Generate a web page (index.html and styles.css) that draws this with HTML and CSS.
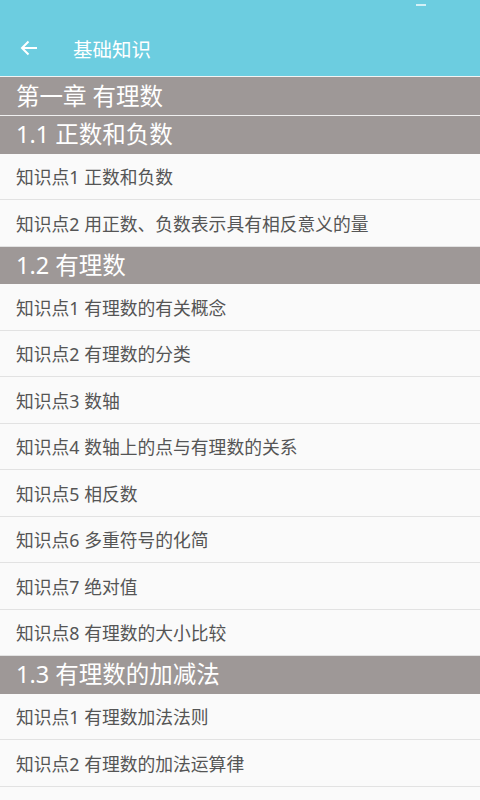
FILE: index.html
```html
<!DOCTYPE html>
<html lang="zh-CN">
<head>
    <meta charset="UTF-8">
    <meta name="viewport" content="width=device-width, initial-scale=1.0">
    <title>基础知识</title>
    <link rel="stylesheet" href="styles.css">
</head>
<body>
    <div class="topbar">
        <div class="status"><span class="status-mark"></span></div>
        <div class="toolbar">
            <svg class="back" width="18" height="16" viewBox="0 0 18 16">
                <path d="M17 8H2M8.5 1.5L2 8l6.5 6.5" fill="none" stroke="#fff" stroke-width="2"/>
            </svg>
            <span class="title">基础知识</span>
        </div>
    </div>

    <div class="list">
        <div class="chapter">第一章 有理数</div>
        <div class="section">1.1 正数和负数</div>
        <div class="item">知识点1 正数和负数</div>
        <div class="item">知识点2 用正数、负数表示具有相反意义的量</div>

        <div class="section">1.2 有理数</div>
        <div class="item">知识点1 有理数的有关概念</div>
        <div class="item">知识点2 有理数的分类</div>
        <div class="item">知识点3 数轴</div>
        <div class="item">知识点4 数轴上的点与有理数的关系</div>
        <div class="item">知识点5 相反数</div>
        <div class="item">知识点6 多重符号的化简</div>
        <div class="item">知识点7 绝对值</div>
        <div class="item">知识点8 有理数的大小比较</div>

        <div class="section">1.3 有理数的加减法</div>
        <div class="item">知识点1 有理数加法法则</div>
        <div class="item">知识点2 有理数的加法运算律</div>
        <div class="item">知识点3 有理数的减法法则</div>
    </div>
</body>
</html>
```

FILE: styles.css
```css
* {
    box-sizing: border-box;
    margin: 0;
    padding: 0;
}

body {
    font-family: "Noto Sans", "Noto Sans CJK SC", sans-serif;
    background-color: #fafafa;
    width: 480px;
    height: 800px;
    overflow: hidden;
}

.topbar {
    background-color: #6ccde0;
    height: 77px;
    border-bottom: 1px solid #f2f4f4;
}

.status {
    height: 24px;
    display: flex;
    justify-content: flex-end;
    padding: 4px 54px 0 0;
}

.status-mark {
    width: 10px;
    height: 2px;
    background-color: rgba(255, 255, 255, 0.7);
}

.toolbar {
    height: 52px;
    display: flex;
    align-items: center;
    padding-left: 20px;
}

.back {
    display: block;
    margin-top: -4px;
}

.title {
    color: #fff;
    font-size: 19.5px;
    margin-left: 35px;
    margin-top: -3px;
}

.chapter,
.section {
    background-color: #9e9897;
    color: #fff;
    font-size: 23.5px;
    height: 39px;
    line-height: 38px;
    padding-left: 16px;
    border-bottom: 1px solid #f0f0f0;
}

.section {
    height: 37.5px;
    line-height: 37px;
    border-bottom: none;
}

.item {
    height: 46.5px;
    display: flex;
    align-items: center;
    padding-left: 16px;
    font-size: 17.8px;
    color: #555;
    border-bottom: 1px solid #e2e2e2;
}
```
